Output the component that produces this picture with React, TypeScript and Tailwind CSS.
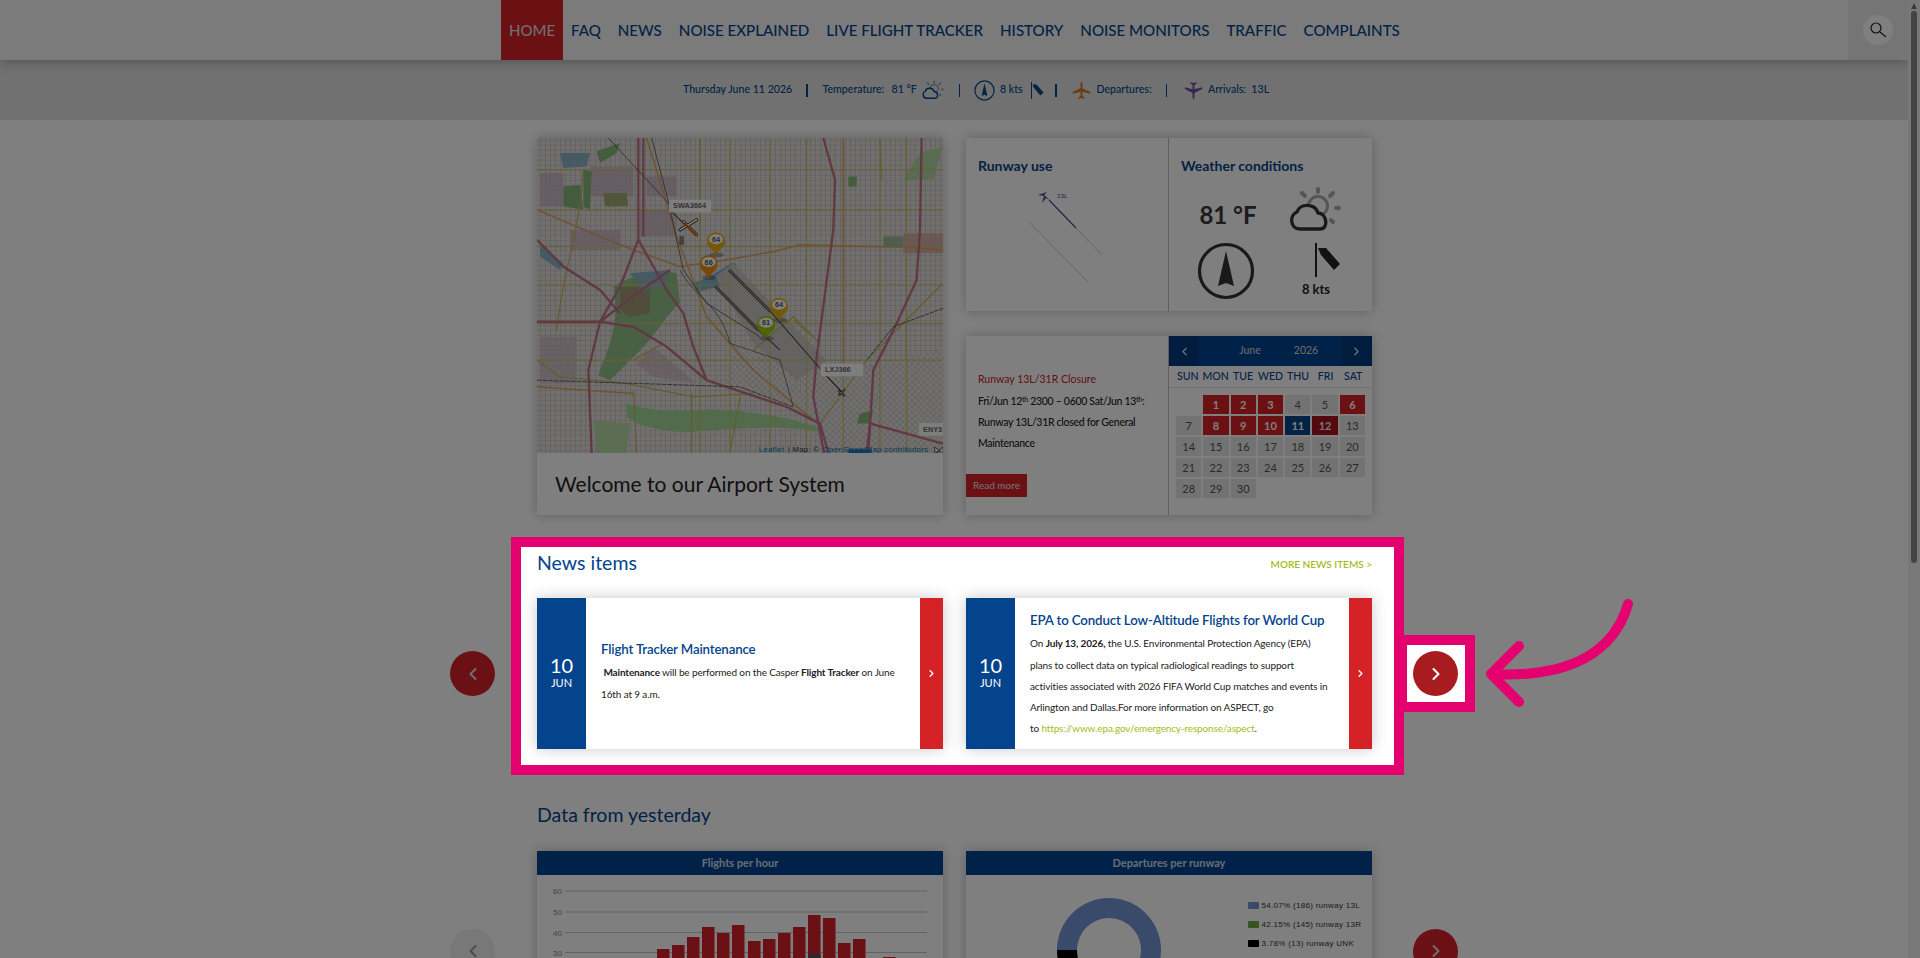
import { ChevronLeft, ChevronRight } from "lucide-react";

const NAV = ["FAQ", "NEWS", "NOISE EXPLAINED", "LIVE FLIGHT TRACKER", "HISTORY", "NOISE MONITORS", "TRAFFIC", "COMPLAINTS"];
const WEEK = ["SUN", "MON", "TUE", "WED", "THU", "FRI", "SAT"];
const RED_DAYS = [1, 2, 3, 6, 8, 9, 10];

function Cloud({ stroke, sun, fill }: { stroke: string; sun: string; fill: string }) {
  return (
    <svg viewBox="0 0 52 47" className="w-full h-full">
      <circle cx="29" cy="20" r="9.5" fill="none" stroke={sun} strokeWidth="3" />
      <g stroke={sun} strokeWidth="4" strokeLinecap="round">
        <path d="M29 3v3M13 7l3 3M44 7l-3 3M47 22h3M42 34l2 2" />
      </g>
      <path d="M11 43C1 43 0 29 8 26C11 17 26 17 29 27C38 27 40 43 31 43Z" fill={fill} stroke={stroke} strokeWidth="3.4" strokeLinejoin="round" />
    </svg>
  );
}

function Compass({ color }: { color: string }) {
  return (
    <svg viewBox="0 0 58 58" className="w-full h-full">
      <circle cx="29" cy="29" r="26.5" fill="none" stroke={color} strokeWidth="3.2" />
      <path d="M29 9L37 44L29 41L21 44Z" fill={color} />
    </svg>
  );
}

function WindFlag({ color }: { color: string }) {
  return (
    <svg viewBox="0 0 26 34" className="w-full h-full">
      <rect x="0" y="0" width="2" height="34" fill={color} />
      <path d="M3 5L11 5L25 21L19 27L6 12Z" fill={color} />
    </svg>
  );
}

function Plane({ color, flip }: { color: string; flip?: boolean }) {
  return (
    <svg viewBox="0 0 24 24" className={flip ? "block w-[19px] h-[19px] rotate-180" : "block w-[19px] h-[19px]"}>
      <path d="M12 1C13 1 13.2 3 13.2 5V9L23 14V16L13.2 13.5V19L16 21V22.5L12 21.5L8 22.5V21L10.8 19V13.5L1 16V14L10.8 9V5C10.8 3 11 1 12 1Z" fill={color} />
    </svg>
  );
}

function Sep() {
  return <span className="block w-[1.5px] h-[13px] bg-[#04448c]" />;
}

function Pin({ x, y, color, label }: { x: number; y: number; color: string; label: string }) {
  return (
    <g>
      <ellipse cx={x + 2} cy={y + 35} rx="22" ry="7" fill="#555" opacity="0.45" />
      <path d={`M${x} ${y + 36}C${x - 8} ${y + 18} ${x - 27} ${y + 14} ${x - 27} ${y - 6}A27 27 0 0 1 ${x + 27} ${y - 6}C${x + 27} ${y + 14} ${x + 8} ${y + 18} ${x} ${y + 36}Z`} fill={color} />
      <ellipse cx={x} cy={y - 12} rx="21" ry="15" fill="#fff" />
      <text x={x} y={y - 4} textAnchor="middle" fontFamily="Liberation Sans, sans-serif" fontWeight="700" fontSize="22" fill="#555">{label}</text>
    </g>
  );
}

function Tag({ x, y, w, label }: { x: number; y: number; w: number; label: string }) {
  return (
    <g>
      <rect x={x} y={y} width={w} height="38" rx="3" fill="#fff" opacity="0.92" />
      <text x={x + 12} y={y + 26} fontFamily="Liberation Sans, sans-serif" fontWeight="700" fontSize="22" fill="#666">{label}</text>
    </g>
  );
}

const H_ROADS = [120, 240, 350, 465, 580, 690];
const V_ROADS = [540, 630, 750, 860, 970, 1080, 1160];
const PINK = [
  "M355 25V330L300 470L240 575L205 720L215 968",
  "M370 25V320",
  "M910 25L945 150L940 300L890 680L880 800L912 968",
  "M1205 25L1200 300L1190 450L1130 580L1060 720L1045 968",
  "M51 575H240L340 590L440 650L560 750L680 790L800 830L900 880L925 968",
  "M51 330L130 410L240 480L300 550",
  "M355 330L440 480L490 550L520 650L560 750",
  "M240 575L350 490L450 420",
  "M1040 968L1050 880L1269 940",
];
const ORANGE = [
  "M51 240L240 320L340 360L480 410L620 390L760 365L840 345L1160 352L1269 360",
  "M380 25L470 320L560 560L700 720L880 870",
  "M970 25V700",
  "M51 770L340 790",
];
const OLIVE = [
  "M540 25V300",
  "M190 120C180 300 130 420 110 600",
  "M51 690L120 740L320 760L520 800L700 790",
  "M340 690L430 640",
  "M700 660L820 560L900 640",
  "M820 570L880 620",
  "M1269 460L1040 690L900 880",
  "M1080 25L1085 150",
  "M660 800L630 968",
  "M515 790V968",
  "M340 780L350 968",
];

function MapArt() {
  return (
    <svg viewBox="51 25 1218 943" preserveAspectRatio="none" className="w-[406px] h-[315px] block">
      <defs>
        <pattern id="grid" width="15" height="15" patternUnits="userSpaceOnUse">
          <path d="M15 0H0V15" fill="none" stroke="#9c9998" strokeWidth="1.7" />
        </pattern>
        <pattern id="diag" width="13" height="13" patternUnits="userSpaceOnUse" patternTransform="rotate(45)">
          <path d="M13 0H0V13" fill="none" stroke="#9c9998" strokeWidth="1.7" />
        </pattern>
        <filter id="soft"><feGaussianBlur stdDeviation="1.2" /></filter>
      </defs>
      <g filter="url(#soft)">
        <rect x="51" y="25" width="1218" height="943" fill="#e5e0de" />
        <rect x="51" y="25" width="1218" height="943" fill="url(#grid)" />
        <path d="M830 700L1000 720L1269 660V968H900Z" fill="#e5e0de" />
        <path d="M830 700L1000 720L1269 660V968H900Z" fill="url(#diag)" />
        <path d="M640 640L760 680L900 860L820 830L620 760Z" fill="#e5e0de" />
        <path d="M640 640L760 680L900 860L820 830L620 760Z" fill="url(#diag)" />
        <g opacity="0.75">
          <path d="M60 130H130V230H60ZM210 110H340V200H210ZM380 140H470V200H380ZM150 300H300V360H150ZM360 240H470V320H360Z" fill="#c9b3c2" />
          <path d="M60 620H170V760H60ZM400 650L530 760L400 740L350 700Z" fill="#cdb9c3" />
          <path d="M1150 310H1269V370H1150Z" fill="#d4a39c" />
          <path d="M1090 320H1150V350H1090Z" fill="#86b581" />
        </g>
        <path d="M130 170L180 165L190 240L130 230ZM190 120L215 125L210 240L190 230ZM230 65L300 40L290 70L240 100Z" fill="#86b97a" />
        <path d="M250 190L320 190L325 230H255Z" fill="#a2ad74" />
        <path d="M120 70L210 70L200 110L130 115ZM60 340L130 400L120 420L60 380Z" fill="#8db5c6" />
        <path d="M280 470C340 430 430 420 470 430L480 520C430 560 410 620 330 690L270 750L235 735C260 660 300 600 280 470Z" fill="#92c088" />
        <path d="M300 470H390V550L330 560L300 540Z" fill="#a09b78" />
        <path d="M330 430L450 420L430 470L370 480Z" fill="#8fb5c4" />
        <path d="M320 820C450 860 520 830 640 840C720 850 800 860 890 890L900 905C780 880 600 900 500 905C420 905 340 880 320 860Z" fill="#a5d698" />
        <path d="M220 870L330 880L320 968H230Z" fill="#b6daa6" />
        <path d="M1150 150L1200 70L1269 50L1240 150Z" fill="#b2d6a1" />
        <path d="M985 140L1010 140L1010 170L985 170ZM1020 850L1060 840L1050 880L1010 880Z" fill="#86b97a" />
        <path d="M515 460C560 450 600 420 640 398L650 405L600 470L530 485Z" fill="#7fb2ca" />
        <path d="M585 440L640 400L920 690L830 750L700 640Z" fill="#c9c6c3" />
        {H_ROADS.map((y) => <path key={y} d={`M51 ${y}H1269`} stroke="#cbc06a" strokeWidth="3.5" fill="none" />)}
        {V_ROADS.map((x) => <path key={x} d={`M${x} 25V968`} stroke="#cbc06a" strokeWidth="3.5" fill="none" />)}
        {OLIVE.map((d) => <path key={d} d={d} stroke="#c4ba62" strokeWidth="4" fill="none" />)}
        {ORANGE.map((d) => <path key={d} d={d} stroke="#dca868" strokeWidth="5" fill="none" />)}
        {PINK.map((d) => <path key={d} d={d} stroke="#c4708a" strokeWidth="7" fill="none" />)}
        <path d="M265 25L445 220M395 25L445 215L490 420L560 520L720 620" stroke="#555" strokeWidth="2.5" fill="none" />
        <path d="M51 750L660 770L820 830" stroke="#666" strokeWidth="3" fill="none" strokeDasharray="14 3" />
        <path d="M480 420C520 500 600 520 630 640L780 690L820 830" stroke="#445" strokeWidth="2" fill="none" />
        <path d="M627 420L752 545M585 468L715 600" stroke="#555" strokeWidth="9" fill="none" />
        <path d="M627 420L752 545M585 468L715 600" stroke="#c9c6c3" strokeWidth="2.5" fill="none" />
        <path d="M752 545L900 715M715 600L780 660" stroke="#444" strokeWidth="3" fill="none" />
        <path d="M1269 535L1120 590L1040 690" stroke="#444" strokeWidth="2.5" fill="none" strokeDasharray="12 3" />
      </g>
      <path d="M920 738L965 785" stroke="#222" strokeWidth="3" fill="none" />
      <path d="M455 245L500 290" stroke="#222" strokeWidth="3" fill="none" />
      <path d="M480 300L530 270M490 275L530 315" stroke="#222" strokeWidth="9" strokeLinecap="round" />
      <path d="M480 300L530 270M490 275L530 315" stroke="#fff" strokeWidth="5" strokeLinecap="round" />
      <path d="M492 280L528 316" stroke="#e8590c" strokeWidth="7" />
      <path d="M485 320V345" stroke="#333" strokeWidth="14" strokeDasharray="3 3" />
      <path d="M955 795L975 778M955 780L975 798" stroke="#222" strokeWidth="6" />
      <path d="M955 795L975 778M955 780L975 798" stroke="#fff" strokeWidth="2" />
      <Tag x={447} y={210} w={126} label="SWA3664" />
      <Tag x={903} y={700} w={127} label="LXJ366" />
      <Tag x={1197} y={878} w={80} label="ENY3" />
      <Pin x={588} y={340} color="#e8b010" label="64" />
      <Pin x={566} y={408} color="#f09010" label="66" />
      <Pin x={777} y={536} color="#e8b010" label="64" />
      <Pin x={738} y={590} color="#9cc800" label="61" />
      <g fontFamily="Liberation Sans, sans-serif" fontSize="24" letterSpacing="0.6">
        <text x="716" y="966" fill="#0078a8">Leaflet</text>
        <text x="803" y="966" fill="#333">| Map: ©</text>
        <text x="908" y="966" fill="#0078a8">OpenStreetMap contributors</text>
      </g>
      <rect x="985" y="957" width="70" height="11" fill="#1878c0" />
      <path d="M1243 950L1262 962L1245 966ZM1255 962L1269 950V968H1250Z" fill="#fff" stroke="#222" strokeWidth="2" />
    </svg>
  );
}

function Arrow({ side, muted }: { side: "left" | "right"; muted?: boolean }) {
  const Icon = side === "left" ? ChevronLeft : ChevronRight;
  const active = side === "right" && !muted;
  return (
    <button className={`w-[45px] h-[45px] shrink-0 rounded-full flex items-center justify-center ${muted ? "bg-[#f0f0f0] text-[#999999]" : active ? "bg-[#a81c20] text-white" : "bg-[#d62028] text-[#dddddd]"}`}>
      <Icon size={20} strokeWidth={2.5} />
    </button>
  );
}

function NewsCard({ title, offset, children }: { title: string; offset: string; children: React.ReactNode }) {
  return (
    <div className="h-[151px] w-[406px] flex bg-white shadow-[0_0_14px_rgba(0,0,0,0.22)]">
      <div className="w-[49px] shrink-0 bg-[#04448c] text-white flex flex-col items-center justify-center pb-[4px]">
        <span className="text-[20px] leading-[24px]">10</span>
        <span className="text-[11px] leading-[14px] mt-[-1px]">JUN</span>
      </div>
      <div className={`flex-1 min-w-0 pl-[15px] flex flex-col justify-center ${offset}`}>
        <h3 className="text-[13.3px] leading-[20px] font-semibold text-[#04448c] mb-[3px] whitespace-nowrap tracking-[-0.15px]">{title}</h3>
        <div className="text-[10px] leading-[21.2px] tracking-[-0.14px] text-[#222222] whitespace-nowrap">{children}</div>
      </div>
      <div className="w-[23px] shrink-0 bg-[#d42227] text-white flex items-center justify-center">
        <ChevronRight size={11} strokeWidth={3} />
      </div>
    </div>
  );
}

function ChartCard({ title, children }: { title: string; children: React.ReactNode }) {
  return (
    <div className="w-[406px] h-[200px] bg-white shadow-[0_0_12px_rgba(0,0,0,0.25)]">
      <div className="h-[24px] bg-[#004290] text-white/80 text-[11px] font-bold flex items-center justify-center">{title}</div>
      {children}
    </div>
  );
}

const BARS = [
  [657, 949], [672, 945], [687, 937], [702, 927], [717, 933], [732, 925], [748, 941], [763, 939],
  [778, 933], [793, 927], [808, 915], [823, 918], [838, 943], [853, 939], [883, 957],
];

function BarChart() {
  return (
    <svg viewBox="537 875 406 176" className="w-[406px] h-[176px] block">
      {[[891, "60"], [912, "50"], [932.5, "40"], [952.5, "30"]].map(([y, t]) => (
        <g key={t as string}>
          <path d={`M565 ${y}H927`} stroke="#c4c4c4" strokeWidth="1" />
          <text x="553" y={(y as number) + 3} fontFamily="Liberation Sans, sans-serif" fontSize="8" fill="#888">{t}</text>
        </g>
      ))}
      {BARS.map(([x, y]) => <rect key={x} x={x} y={y} width="12.5" height={1051 - y} fill="#d62028" />)}
      <rect x="808" y="954" width="12.5" height="20" fill="#555" />
    </svg>
  );
}

function arc(a0: number, a1: number, R: number, r: number) {
  const p = (a: number, q: number) => {
    const t = (a * Math.PI) / 180;
    return `${(60 + q * Math.sin(t)).toFixed(2)} ${(60 - q * Math.cos(t)).toFixed(2)}`;
  };
  const large = a1 - a0 > 180 ? 1 : 0;
  return `M${p(a0, R)}A${R} ${R} 0 ${large} 1 ${p(a1, R)}L${p(a1, r)}A${r} ${r} 0 ${large} 0 ${p(a0, r)}Z`;
}

function Donut() {
  return (
    <svg viewBox="0 0 120 120" className="w-[120px] h-[120px] shrink-0">
      <path d={arc(270, 360, 52, 32)} fill="#7394d6" />
      <path d={arc(0, 104.6, 52, 32)} fill="#7394d6" />
      <path d={arc(104.6, 256.4, 52, 32)} fill="#6fa84a" />
      <path d={arc(256.4, 270, 52, 32)} fill="#000" />
    </svg>
  );
}

function Legend({ color, text }: { color: string; text: string }) {
  return (
    <div className="h-[19px] flex items-center gap-[2.5px]">
      <span className={`w-[11px] h-[7px] rounded-[1px] ${color}`} />
      <span className="text-[8px] tracking-[0.3px] text-[#333333] font-['Liberation_Sans',sans-serif] whitespace-nowrap">{text}</span>
    </div>
  );
}

export default function App() {
  return (
    <div className="relative w-[1920px] h-[958px] overflow-hidden flex bg-white font-['Lato',sans-serif]">
      <div className="w-[1908px] h-[958px] overflow-hidden">
        <header className="relative z-10 h-[60px] bg-[#f6f6f6] flex shadow-[0_1px_12px_rgba(0,0,0,0.3)] pl-[501px]">
          <a className="h-[60px] w-[62px] bg-[#d62027] text-[#dddddd] text-[15px] font-medium flex items-center justify-center">HOME</a>
          <nav className="flex items-center pl-[8px] gap-[17px] text-[15.1px] font-medium text-[#04448c] whitespace-nowrap">
            {NAV.map((n) => <a key={n}>{n}</a>)}
          </nav>
          <div className="ml-auto w-[60px] bg-[#ebebeb] flex items-center justify-center">
            <div className="w-[30px] h-[30px] rounded-full bg-white flex items-center justify-center">
              <svg viewBox="0 0 20 20" className="w-[20px] h-[20px]">
                <circle cx="8" cy="8" r="5" fill="none" stroke="#222" strokeWidth="1.2" />
                <path d="M12 12L18 17" stroke="#222" strokeWidth="1.1" />
              </svg>
            </div>
          </div>
        </header>

        <div className="h-[60px] bg-[#e2e2e2] flex items-center pl-[683px] text-[10.6px] font-medium text-[#04448c] whitespace-nowrap">
          <span className="w-[109px]">Thursday June 11 2026</span>
          <span className="ml-[14px]"><Sep /></span>
          <span className="ml-[15px] w-[63px]">Temperature:</span>
          <span className="ml-[6px] w-[25px]">81 °F</span>
          <span className="ml-[5px] w-[22px] h-[20px] block"><Cloud stroke="#04448c" sun="#8a9ab0" fill="#e2e2e2" /></span>
          <span className="ml-[15px]"><Sep /></span>
          <span className="ml-[14px] w-[21px] h-[21px] block"><Compass color="#04448c" /></span>
          <span className="ml-[5px] w-[23px]">8 kts</span>
          <span className="ml-[8px] w-[13px] h-[17px] block"><WindFlag color="#04448c" /></span>
          <span className="ml-[11px]"><Sep /></span>
          <span className="ml-[15px]"><Plane color="#d9751c" /></span>
          <span className="ml-[6px] w-[56px]">Departures:</span>
          <span className="ml-[13px]"><Sep /></span>
          <span className="ml-[17px]"><Plane color="#6b4aa0" flip /></span>
          <span className="ml-[5px]">Arrivals:&nbsp; 13L</span>
        </div>

        <main className="pt-[18px]">
          <section className="ml-[537px] w-[835px] grid grid-cols-[406px_406px] gap-x-[23px]">
            <div className="h-[377px] bg-white shadow-[0_0_12px_rgba(0,0,0,0.25)]">
              <MapArt />
              <div className="h-[62px] pl-[18px] flex items-center text-[21px] text-[#222222]">Welcome to our Airport System</div>
            </div>
            <div className="flex flex-col gap-[25px]">
              <div className="h-[173px] bg-white grid grid-cols-[203px_203px] shadow-[0_0_12px_rgba(0,0,0,0.25)]">
                <div className="border-r border-[#bdbdbd] pl-[12px] pt-[18px]">
                  <h3 className="text-[14px] leading-[20px] font-bold text-[#04448c]">Runway use</h3>
                  <svg viewBox="0 0 100 100" className="w-[100px] h-[100px] ml-[39px] mt-[6px] overflow-visible">
                    <path d="M12 40L72 101M32 18L85 73" stroke="#cccccc" strokeWidth="1" />
                    <path d="M32 18L59 46" stroke="#5b3f94" strokeWidth="1.2" />
                    <path d="M27 11L30 10L27 13L33 18L29 16L25 21L27 14L21 13Z" fill="#5b3f94" />
                    <text x="40" y="16" fontSize="6" fontFamily="Lato, sans-serif" fill="#5b3f94">13L</text>
                  </svg>
                </div>
                <div className="pl-[12px] pt-[18px]">
                  <h3 className="text-[14px] leading-[20px] font-bold text-[#04448c]">Weather conditions</h3>
                  <div className="grid grid-cols-[108px_84px] mt-[14px]">
                    <div className="h-[48px] flex items-center justify-center text-[24px] font-bold text-[#383838] pt-[2px] pr-[14px]">81 °F</div>
                    <div className="h-[47px] w-[52px] mt-[-4px]"><Cloud stroke="#333333" sun="#aaaaaa" fill="#ffffff" /></div>
                    <div className="w-[58px] h-[58px] ml-[16px] mt-[4px]"><Compass color="#333333" /></div>
                    <div className="flex flex-col items-center">
                      <div className="w-[26px] h-[34px] mt-[5px] ml-[-6px]"><WindFlag color="#222222" /></div>
                      <span className="text-[13px] font-bold text-[#222222] mt-[3px] ml-[-30px]">8 kts</span>
                    </div>
                  </div>
                </div>
              </div>

              <div className="h-[179px] bg-white grid grid-cols-[203px_203px] shadow-[0_0_12px_rgba(0,0,0,0.25)]">
                <div className="border-r border-[#bdbdbd] flex flex-col">
                  <div className="pl-[12px] pt-[36px] h-[138px]">
                    <p className="text-[10.5px] leading-[14px] text-[#c8202a]">Runway 13L/31R Closure</p>
                    <p className="text-[10.5px] leading-[21px] font-medium tracking-[-0.3px] text-[#222222] mt-[5px] whitespace-nowrap">
                      Fri/Jun 12<sup className="text-[7px]">th</sup> 2300 – 0600 Sat/Jun 13<sup className="text-[7px]">th</sup>:<br />
                      Runway 13L/31R closed for General<br />
                      Maintenance
                    </p>
                  </div>
                  <a className="w-[61px] h-[23px] bg-[#d62027] text-[#e8e8e8] text-[10px] flex items-center justify-center">Read more</a>
                </div>
                <div>
                  <div className="h-[30px] bg-[#004290] text-[#dddddd] text-[10.5px] flex items-center">
                    <span className="w-[30px] h-full bg-[#003a80] flex items-center justify-center"><ChevronLeft size={13} strokeWidth={2.5} /></span>
                    <span className="ml-[36px] w-[30px] text-center">June</span>
                    <span className="ml-[26px] w-[30px] text-center">2026</span>
                    <span className="ml-auto w-[31px] h-full bg-[#003a80] flex items-center justify-center"><ChevronRight size={13} strokeWidth={2.5} /></span>
                  </div>
                  <div className="h-[22px] border-b border-[#e4e4e4] grid grid-cols-7 gap-x-[2px] px-[6px] items-center text-[10.5px] font-medium text-[#04448c] text-center">
                    {WEEK.map((w) => <span key={w}>{w}</span>)}
                  </div>
                  <div className="grid grid-cols-7 gap-[2px] px-[7px] mt-[7px] text-[11px] text-center leading-[19px] text-[#555555]">
                    <span />
                    {Array.from({ length: 30 }, (_, i) => i + 1).map((d) => (
                      <span key={d} className={d === 11 ? "h-[19px] bg-[#04448c] text-white font-bold" : d === 12 ? "h-[19px] bg-[#a4141c] text-[#eeeeee] font-bold" : RED_DAYS.includes(d) ? "h-[19px] bg-[#d62027] text-white font-bold" : "h-[19px] bg-[#e6e6e6]"}>{d}</span>
                    ))}
                  </div>
                </div>
              </div>
            </div>
          </section>

          <section className="ml-[537px] w-[835px] mt-[33px] h-[30px] flex items-center justify-between">
            <h2 className="text-[19.5px] text-[#04448c]">News items</h2>
            <a className="text-[10px] font-semibold text-[#a4bd22] mt-[2px]">MORE NEWS ITEMS &gt;</a>
          </section>

          <section className="ml-[450px] mt-[20px] flex items-center">
            <Arrow side="left" />
            <div className="ml-[42px] w-[835px] flex gap-[23px]">
              <NewsCard title="Flight Tracker Maintenance" offset="pb-[3px]">
                <p>&nbsp;<b>Maintenance</b> will be performed on the Casper <b>Flight Tracker</b> on June<br />16th at 9 a.m.</p>
              </NewsCard>
              <NewsCard title="EPA to Conduct Low-Altitude Flights for World Cup" offset="pt-[3px]">
                <p>
                  On <b>July 13, 2026,</b> the U.S. Environmental Protection Agency (EPA)<br />
                  plans to collect data on typical radiological readings to support<br />
                  activities associated with 2026 FIFA World Cup matches and events in<br />
                  Arlington and Dallas.For more information on ASPECT, go<br />
                  to <a className="text-[#a4bd22]">https://www.epa.gov/emergency-response/aspect</a>.
                </p>
              </NewsCard>
            </div>
            <div className="ml-[41px]"><Arrow side="right" /></div>
          </section>

          <section className="ml-[537px] mt-[51px] h-[30px] flex items-center">
            <h2 className="text-[19.5px] text-[#04448c]">Data from yesterday</h2>
          </section>

          <section className="ml-[450px] mt-[21px] flex items-center">
            <Arrow side="left" muted />
            <div className="ml-[42px] w-[835px] flex gap-[23px]">
              <ChartCard title="Flights per hour"><BarChart /></ChartCard>
              <ChartCard title="Departures per runway">
                <div className="flex pt-[16px]">
                  <div className="ml-[83px] mt-[-1px]"><Donut /></div>
                  <div className="ml-[79px] mt-[-5px] pt-[10px]">
                    <Legend color="bg-[#7394d6]" text="54.07% (186) runway 13L" />
                    <Legend color="bg-[#6fa84a]" text="42.15% (145) runway 13R" />
                    <Legend color="bg-black" text="3.78% (13) runway UNK" />
                  </div>
                </div>
              </ChartCard>
            </div>
            <div className="ml-[41px]"><button className="w-[45px] h-[45px] rounded-full bg-[#d62028] text-[#dddddd] flex items-center justify-center"><ChevronRight size={20} strokeWidth={2.5} /></button></div>
          </section>
        </main>
      </div>

      <div className="w-[12px] h-[958px] bg-[#f1f1f1] flex flex-col items-center pt-[3px]">
        <span className="w-0 h-0 border-l-[3.5px] border-r-[3.5px] border-b-[6px] border-l-transparent border-r-transparent border-b-[#777777]" />
        <span className="mt-[2px] w-[6px] h-[552px] rounded-[3px] bg-[#888888]" />
      </div>

      <svg viewBox="0 0 1920 958" className="absolute z-20 inset-0 w-[1920px] h-[958px] pointer-events-none">
        <path fillRule="evenodd" fill="rgba(0,0,0,0.5)" d="M0 0H1920V958H0ZM521 547V765H1394V547ZM1407 645V702H1465V645Z" />
        <rect x="516" y="542" width="883" height="228" fill="none" stroke="#e4006f" strokeWidth="10" />
        <rect x="1402" y="640" width="68" height="67" fill="none" stroke="#e4006f" strokeWidth="10" />
        <path d="M1628 604C1614 652 1570 678 1492 674M1519 646L1491 674L1519 702" fill="none" stroke="#e4006f" strokeWidth="10" strokeLinecap="round" strokeLinejoin="round" />
      </svg>
    </div>
  );
}
